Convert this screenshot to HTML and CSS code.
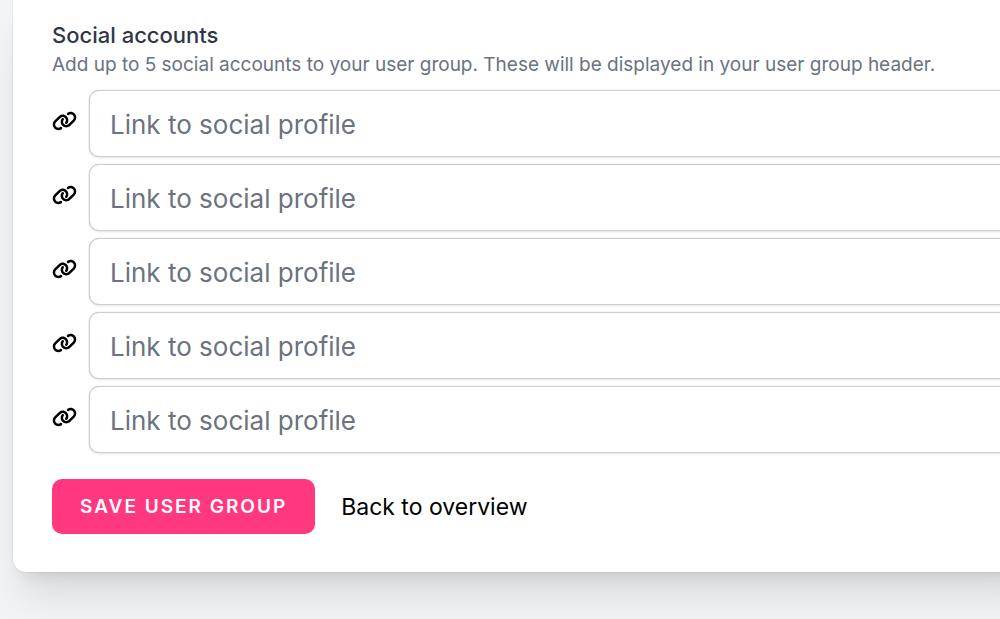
FILE: index.html
```html
<!DOCTYPE html>
<html lang="en">
<head>
<meta charset="utf-8">
<meta name="viewport" content="width=device-width, initial-scale=1">
<title>User group</title>
<link rel="stylesheet" href="styles.css">
</head>
<body>
<svg class="sprite" aria-hidden="true">
  <symbol id="link" viewBox="0 0 640 512"><path d="M579.8 267.7c56.5-56.5 56.5-148 0-204.5c-50-50-128.8-56.5-186.3-15.4l-1.6 1.1c-14.4 10.3-17.7 30.3-7.4 44.6s30.3 17.7 44.6 7.4l1.6-1.1c32.1-22.9 76-19.3 103.8 8.6c31.5 31.5 31.5 82.5 0 114L422.300 334.800c-31.500 31.500-82.500 31.500-114 0c-27.900-27.900-31.500-71.800-8.600-103.800l1.100-1.600c10.300-14.400 6.900-34.400-7.400-44.600s-34.400-6.900-44.600 7.400l-1.100 1.600C206.500 251.200 213 330 263 380c56.500 56.500 148 56.500 204.500 0L579.800 267.700zM60.200 244.300c-56.500 56.500-56.500 148 0 204.500c50 50 128.800 56.500 186.300 15.400l1.600-1.100c14.400-10.300 17.700-30.300 7.400-44.600s-30.300-17.700-44.600-7.400l-1.600 1.100c-32.100 22.900-76 19.300-103.800-8.600C74 372 74 321 105.500 289.500L217.700 177.200c31.500-31.500 82.500-31.500 114 0c27.900 27.900 31.500 71.800 8.600 103.900l-1.100 1.600c-10.300 14.400-6.900 34.400 7.400 44.600s34.400 6.900 44.600-7.400l1.100-1.600C433.500 260.800 427 182 377 132c-56.500-56.500-148-56.500-204.500 0L60.200 244.300z"/></symbol>
</svg>
<main class="page">
  <form class="card">
    <fieldset class="accounts">
      <legend class="title">Social accounts</legend>
      <p class="hint">Add up to 5 social accounts to your user group. These will be displayed in your user group header.</p>
      <div class="rows">
        <div class="row"><svg class="icon" aria-hidden="true"><use href="#link"/></svg><input class="field" type="url" placeholder="Link to social profile" aria-label="Social profile 1"></div>
        <div class="row"><svg class="icon" aria-hidden="true"><use href="#link"/></svg><input class="field" type="url" placeholder="Link to social profile" aria-label="Social profile 2"></div>
        <div class="row"><svg class="icon" aria-hidden="true"><use href="#link"/></svg><input class="field" type="url" placeholder="Link to social profile" aria-label="Social profile 3"></div>
        <div class="row"><svg class="icon" aria-hidden="true"><use href="#link"/></svg><input class="field" type="url" placeholder="Link to social profile" aria-label="Social profile 4"></div>
        <div class="row"><svg class="icon" aria-hidden="true"><use href="#link"/></svg><input class="field" type="url" placeholder="Link to social profile" aria-label="Social profile 5"></div>
      </div>
    </fieldset>
    <div class="actions">
      <button class="save" type="submit">SAVE USER GROUP</button>
      <a class="back" href="#">Back to overview</a>
    </div>
  </form>
</main>
</body>
</html>
```
FILE: styles.css
```css
* { box-sizing: border-box; }
body {
  margin: 0;
  min-height: 100vh;
  background: #f3f4f6;
  color: #000;
  font-family: Inter, "Liberation Sans", sans-serif;
  overflow: hidden;
}
.sprite { position: absolute; width: 0; height: 0; }
.page { padding: 0 0 47px 13px; }
.card {
  margin-right: -40px;
  padding: 20px 0 38px 39px;
  background: #fff;
  border-radius: 0 0 0 13px;
  box-shadow: 0 32px 40px -8px rgba(0, 0, 0, .1), 0 13px 16px -10px rgba(0, 0, 0, .1), 0 0 2px rgba(0, 0, 0, .15);
}
.accounts { margin: 0; padding: 0; border: 0; min-width: 0; }
.title { padding: 0; font-size: 22px; line-height: 30px; font-weight: 500; color: #2f3747; }
.hint { margin: 0; font-size: 19px; line-height: 30px; color: #6b7280; white-space: nowrap; }
.rows { display: grid; gap: 7px; margin-top: 10px; }
.row { display: flex; align-items: center; gap: 12px; }
.icon { flex: none; width: 25px; height: 20px; margin-bottom: 6px; }
.field {
  flex: 1;
  min-width: 0;
  height: 67px;
  padding: 2px 20px 0;
  border: 1px solid #cdced2;
  border-radius: 10px;
  background: #fff;
  box-shadow: 0 0 1px rgba(0, 0, 0, .35), 0 2px 3px rgba(0, 0, 0, .05);
  color: #111827;
  font: 26px/38px Inter, "Liberation Sans", sans-serif;
}
.field::placeholder { color: #6b7280; opacity: 1; }
.actions { display: flex; align-items: center; gap: 26px; margin-top: 26px; }
.save {
  padding: 14px 28px;
  border: 0;
  border-radius: 10px;
  background: #ff387f;
  color: #fff;
  font: 600 19px/27px Inter, "Liberation Sans", sans-serif;
  letter-spacing: 2px;
}
.back { color: #000; font-size: 23px; line-height: 32px; text-decoration: none; }
```
